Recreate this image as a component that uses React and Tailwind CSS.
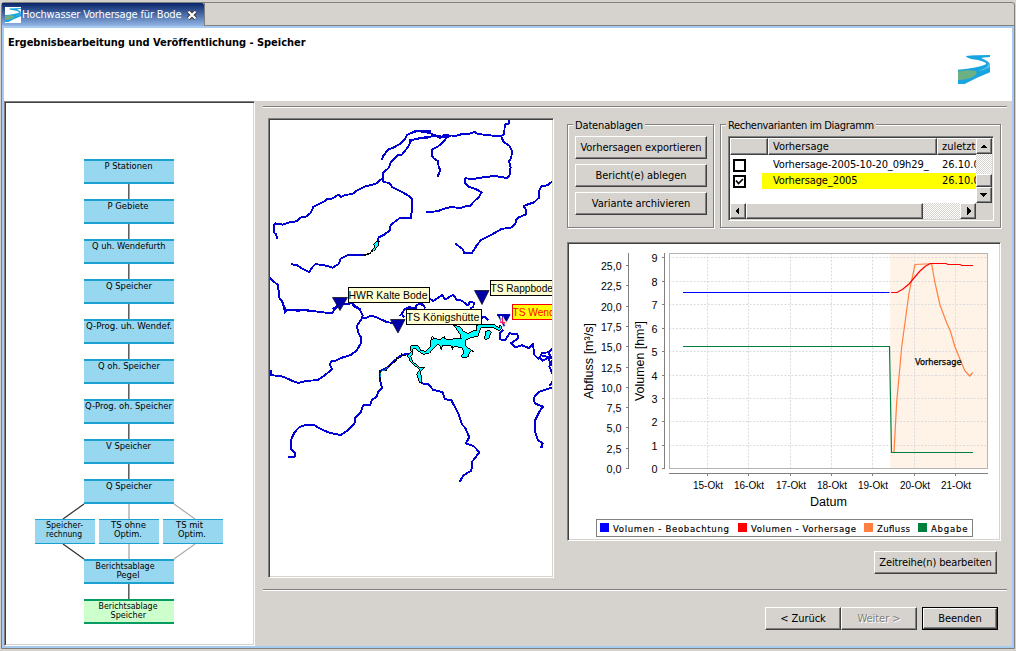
import React from "react";

const UI = "font-['DejaVu_Sans_Condensed','DejaVu_Sans',sans-serif]";
const inset =
  "border border-t-[#808080] border-l-[#808080] border-b-white border-r-white p-px shadow-[inset_1px_1px_0_#404040,inset_-1px_-1px_0_#d6d3ce]";
const raised =
  "border border-t-white border-l-white border-b-[#404040] border-r-[#404040] shadow-[inset_-1px_-1px_0_#808080] bg-[#d6d3ce]";

function River({ className }) {
  return (
    <svg className={className} viewBox="0 0 96 87" preserveAspectRatio="none">
      <path d="M24 3 Q50 0 96 0 V6 Q72 7 70 10 Q96 20 96 30 V52 Q60 66 20 87 H0 V44 Q60 40 84 28 Q88 22 60 15 Q24 11 24 3Z" fill="#18a4e0" />
      <path d="M70 10 Q92 18 92 28 Q86 42 60 47 L76 46 L96 36 V26Z" fill="#5cc0ea" />
      <path d="M0 49 Q30 43 54 48 Q62 58 40 68 Q20 75 0 75Z" fill="#6cb083" />
    </svg>
  );
}

function Button({ children, className = "", disabled, primary }) {
  const btn = (
    <button
      className={`${raised} flex items-center justify-center whitespace-nowrap text-[11px] leading-none tracking-[-0.06px] ${
        disabled ? "text-[#808080] [text-shadow:1px_1px_0_#fff]" : "text-black"
      } ${primary ? "h-[21px] w-full" : "h-[23px]"} ${className}`}
    >
      {children}
    </button>
  );
  return primary ? <div className="h-[23px] w-[76px] border border-black">{btn}</div> : btn;
}

function Group({ title, className, titleClass = "", children }) {
  return (
    <fieldset className={`relative h-[104px] border border-[#808080] shadow-[1px_1px_0_#fff,inset_1px_1px_0_#fff] ${className}`}>
      <div className={`absolute -top-[6px] left-[5px] whitespace-nowrap bg-[#d6d3ce] px-[2px] text-[11px] leading-[14px] ${titleClass}`}>{title}</div>
      {children}
    </fieldset>
  );
}

const STEPS = [
  ["P Stationen", 104.5, 48],
  ["P Gebiete", 107.5, 41],
  ["Q uh. Wendefurth", 92, 73.5],
  ["Q Speicher", 106, 46],
  ["Q-Prog. uh. Wendef.", 86, 86],
  ["Q oh. Speicher", 98, 62],
  ["Q-Prog. oh. Speicher", 85, 87],
  ["V Speicher", 106, 45],
  ["Q Speicher", 106, 46],
];
const BRANCHES = [
  [35, "Speicher-", 46, 37, "rechnung", 46, 36],
  [99, "TS ohne", 111, 35, "Optim.", 114, 28],
  [163, "TS mit", 176, 27, "Optim.", 178, 28],
];

function Txt({ x, y, w, children, ...rest }) {
  return (
    <text x={x} y={y} textLength={w} lengthAdjust="spacingAndGlyphs" {...rest}>
      {children}
    </text>
  );
}

function Workflow() {
  return (
    <svg className={`block h-[541px] w-[247px] ${UI} text-[9.5px]`} viewBox="6 103 247 541">
      {STEPS.map(([label, x, w], i) => {
        const y = 159 + i * 40;
        return (
          <g key={i}>
            {i < 8 && <path d={`M128 ${y + 25}h1v15h-1z`} fill="#606060" />}
            {i < 8 && <path d={`M129 ${y + 25}h1v15h-1z`} fill="#a0a0a0" />}
            <rect x="84" y={y} width="90" height="25" fill="#1ba1cf" />
            <rect x="84" y={y + 2} width="90" height="21" fill="#97d7ef" />
            <Txt x={x} y={y + 10} w={w}>{label}</Txt>
          </g>
        );
      })}
      <g fill="none" strokeWidth="1.2">
        <path d="M84 504L63 519M63 544L84 559" stroke="#303030" />
        <path d="M174 504L195 519M195 544L174 559" stroke="#acacac" />
        <path d="M129 504V519M129 544V559" stroke="#c6c6c6" strokeWidth="2" />
      </g>
      {BRANCHES.map(([x, a, ax, aw, b, bx, bw]) => (
        <g key={x}>
          <rect x={x} y="519" width="60" height="25" fill="#1ba1cf" />
          <rect x={x} y="520" width="60" height="23" fill="#97d7ef" />
          <Txt x={ax} y="528" w={aw}>{a}</Txt>
          <Txt x={bx} y="537" w={bw}>{b}</Txt>
        </g>
      ))}
      <rect x="84" y="559" width="90" height="25" fill="#1ba1cf" />
      <rect x="84" y="561" width="90" height="21" fill="#97d7ef" />
      <Txt x={95.5} y="569" w={59}>Berichtsablage</Txt>
      <Txt x={116.5} y="578" w={23}>Pegel</Txt>
      <path d="M128 584h1v15h-1z" fill="#606060" />
      <path d="M129 584h1v15h-1z" fill="#a0a0a0" />
      <rect x="84" y="599" width="90" height="25" fill="#069b60" />
      <rect x="84" y="601" width="90" height="21" fill="#ccffcc" />
      <Txt x={98.5} y="609" w={59}>Berichtsablage</Txt>
      <Txt x={110.5} y="618" w={35.5}>Speicher</Txt>
    </svg>
  );
}

function RiverMap() {
  return (
    <svg className="block h-[456px] w-[282px] font-['Liberation_Sans',Arial,sans-serif] text-[11px]" viewBox="270 120 282 456">
      <g fill="none" stroke="#0000d2" strokeWidth="5.8" shapeRendering="crispEdges" strokeLinejoin="round">
        <g transform="translate(264 110) scale(.33333)">
          <path d="M353 150L358 138L373 118L390 112L408 102L424 86L428 76L440 70L462 63L500 62" />
          <path d="M500 82L465 85L441 91L434 108L422 124L414 134L401 136L380 158L374 174L357 188L356 205L346 212L336 221L302 230L278 242L264 253L244 254L232 261L224 254L202 267L188 267L184 273L148 291L140 309L126 320L108 323L97 334L76 337L56 344L34 340L30 345V368L36 372L40 386" />
          <path d="M356 205L358 216L376 219L385 232L414 246L437 259L444 268V302L440 325H406L380 345L378 361L359 375L344 382L341 395" />
          <path d="M82 463L98 465L118 478L136 486L145 471L154 463L174 464L206 473L224 462L230 446L250 436L302 434" />
          <path d="M16 503L28 514L42 525L46 564L55 573L64 610" />
          <path d="M80 599H110M122 599H135M206 598L222 586M258 576L274 588L290 599" />
          <path d="M420 598L435 592L455 598M466 581L480 588" />
        </g>
        <g transform="translate(410 110) scale(.33333)">
          <path d="M-4 73L15 63L38 65L60 69L75 76L90 84L100 76L140 77L160 71L176 72L194 66L204 72L230 75L270 79L283 73L284 44L296 41L297 30" />
          <path d="M-4 91L25 86L55 80L82 78L110 82L125 76M110 82L100 96L83 110L66 119L65 136L72 146L84 153L86 170L91 180L83 200" />
          <path d="M274 79L280 95L297 106L306 124L304 142L297 154L302 172L298 198L290 204L256 198L225 201L190 207L166 205L165 220L178 231L201 239L215 247L206 262L191 275L181 287L166 289L150 294L121 291L100 297L82 304L48 306" />
          <path d="M428 214L412 226L395 228L386 244L387 263L372 277L354 283L341 288L348 300L347 314L328 321L318 330L316 342L306 352L274 357L245 374L212 391L199 408L186 429H162L159 418L136 401" />
        </g>
        <g transform="translate(264 300) scale(.33333)">
          <path d="M52 0L66 32L82 29L102 33L118 29L136 33L154 34L174 37L204 39L214 27L228 14L264 10L272 20L288 29L296 46L294 55L308 53L322 47L342 54L370 67L392 69" />
          <path d="M294 55L278 78L284 100L291 112V130L278 151L262 164L234 173L218 181L201 184L198 194L204 208L180 228L160 241L129 242L104 249L86 243L60 231L42 227L20 226V211" />
          <path d="M438 162L414 164L394 180L370 203L347 214L348 240L354 264L342 275L339 290L324 300L318 315H298L291 335L273 355L272 369L252 391L231 405L198 399L166 385L150 375L125 374L104 383L91 398L80 422V445L94 460L91 472H72" />
          <path d="M420 52L414 42L420 30L436 23L460 25M466 10L480 18" />
        </g>
        <g transform="translate(400 270) scale(.33333)">
          <path d="M88 85L100 93L126 75L136 88L160 74L171 90L186 92L204 107L209 96L222 98L220 110L210 116" />
          <path d="M0 138L14 118L28 111L46 117L50 105L66 100L76 114M242 152L246 142H256L265 151M290 134H330M310 180L300 190V208L315 210L329 190L352 193L356 204L333 220L345 232L366 226L386 234L399 222L403 255L416 267L426 250L448 246L457 237M418 258L427 273L445 263L451 281L457 287M424 256L455 264M446 250L458 268L448 290L458 312V345M457 335L449 348" />
          <path d="M456 353L432 360L415 367L402 383L404 400L429 410L420 422L406 449V486L413 510L428 520L426 532H420" />
          <path d="M64 340L84 342L100 360L128 366L134 387L154 391L175 430L186 463L196 474L208 502L197 520L222 529L238 547L217 574L214 602L190 616L179 636" />
        </g>
      </g>
      <g transform="translate(400 270) scale(.33333)" shapeRendering="crispEdges" stroke="#000" strokeWidth="3" fill="#0ff">
        <path d="M20 258L34 246L30 230L36 227L55 227L63 242L78 244L92 228L93 210L102 205L95 198L104 205L120 209L132 200L137 208L184 206L180 192L170 178L160 165L180 170L190 183L204 190L216 184L230 180V166L245 162L284 165L297 174L300 166L306 171L299 182L283 174L242 174L234 198L210 204L196 211L198 229L216 241L208 248L204 260L190 264L182 258L192 248L186 233L164 229L158 236L152 226L128 225L124 235L114 221L98 238L88 250L70 253L54 242L46 235L38 236V252L32 258L38 275L50 284L60 294L73 292L60 308L66 322L66 340L58 336L50 312L60 300L46 288L28 272L28 264Z" />
        <path d="M256 186L264 180L274 186L266 206L254 208Z" />
        <path d="M94 200L96 210M134 198V208M122 232L126 240M158 228V240M216 241L222 246" fill="none" strokeWidth="4" />
      </g>
      <g transform="translate(264 110) scale(.33333)" shapeRendering="crispEdges" stroke="#000" strokeWidth="3">
        <path d="M322 424L334 408L327 404L339 393L346 394L341 410L328 424Z" fill="#0ff" />
        <path d="M300 436L318 430L326 420" fill="none" strokeWidth="4" />
      </g>
      <g transform="translate(264 300) scale(.33333)" shapeRendering="crispEdges" stroke="#000" strokeWidth="4" fill="none">
        <path d="M426 166L412 168L398 180L386 190L370 204L366 212L350 216L344 208M350 218L346 228L350 244" strokeDasharray="11 7" />
        <path d="M412 158V172M398 170V184" strokeWidth="3" />
        <path d="M372 200L362 210L352 214M351 220V232" stroke="#00d8d8" strokeWidth="2" />
      </g>
      <g fill="#0000a8" stroke="#101020" strokeWidth=".8">
        <path d="M332.500 297.500H347.500L340 310.500Z" />
        <path d="M390.500 319.500H405L398 333Z" />
        <path d="M474.500 290.500H489L482 304.500Z" />
        <path d="M497 314.500H510.500L504 327Z" stroke="none" />
      </g>
      <path d="M500 316l2 0 1 6-2 0z" fill="#fff" />
      <path d="M503 316l2 4 2 2-1 4-3-3z" fill="#ffef9b" />
      <path d="M500 322l5 1M502 318l1 6" stroke="#ff1478" strokeWidth="1.4" />
      <g fill="#ffffd2" stroke="#000">
        <rect x="348.500" y="287.500" width="81" height="15" />
        <rect x="406.500" y="309.500" width="75" height="15" />
        <rect x="490.500" y="280.500" width="80" height="15" />
        <rect x="512.500" y="304.500" width="80" height="15" fill="#ff0" stroke="red" />
      </g>
      <Txt x={348.500} y="299" w={79}>HWR Kalte Bode</Txt>
      <Txt x={406.500} y="321" w={73}>TS Königshütte</Txt>
      <Txt x={490.500} y="292" w={62.500}>TS Rappbode</Txt>
      <Txt x={512.500} y="316" w={68} fill="red">TS Wendefurth</Txt>
    </svg>
  );
}

const LEFT = ["0,0", "2,5", "5,0", "7,5", "10,0", "12,5", "15,0", "17,5", "20,0", "22,5", "25,0"];
const DAYS = [707.5, 748.5, 790.5, 831.5, 872.5, 914.5, 955.5];
const GRID = [468.5, 445.5, 421.5, 398.5, 375.5, 351.5, 328.5, 304.5, 281.5, 257.5];
const LEGEND = [
  ["#0000ff", 600, "Volumen - Beobachtung", 116],
  ["#ff0000", 738, "Volumen - Vorhersage", 105],
  ["#ff8040", 864, "Zufluss", 33],
  ["#00803f", 918, "Abgabe", 36.5],
];

function Chart() {
  return (
    <svg className="block h-[295px] w-[430px] font-['Liberation_Sans',Arial,sans-serif] text-[10px]" viewBox="569 244 430 295">
      <rect x="890" y="253" width="97" height="215" fill="#fff2e6" />
      <g stroke="#dcdcdc" strokeDasharray="2 1.5">
        {GRID.map((y) => <path key={y} d={`M669 ${y}H987`} />)}
        {DAYS.map((x) => <path key={x} d={`M${x} 253V468`} />)}
      </g>
      <rect x="669.500" y="253.500" width="318" height="215" fill="none" stroke="#b4b4b4" />
      <path d="M628.500 253V469M664.500 253V469M669 473.500H988" stroke="#808080" />
      {LEFT.map((t, i) => {
        const y = Math.round(468 - i * 20.3) + 0.5;
        const w = t.length > 3 ? 20.5 : 15;
        return (
          <g key={t}>
            <path d={`M626 ${y}h2`} stroke="#808080" />
            <Txt x={621.5 - w} y={y + 4} w={w}>{t}</Txt>
          </g>
        );
      })}
      {GRID.map((y, i) => (
        <g key={y}>
          <path d={`M662 ${y}h2`} stroke="#808080" />
          <Txt x={651.5} y={y + 4} w={6}>{i}</Txt>
        </g>
      ))}
      {DAYS.map((x, i) => (
        <g key={x}>
          <path d={`M${x} 474v2`} stroke="#808080" />
          <Txt x={x - 14.5} y="489" w={30}>{`${15 + i}-Okt`}</Txt>
        </g>
      ))}
      <g className="text-[12px]">
        <Txt x={810} y="506" w={37}>Datum</Txt>
        <Txt x={0} y={0} w={76} transform="translate(593 399) rotate(-90)">Abfluss [m³/s]</Txt>
        <Txt x={0} y={0} w={80} transform="translate(644 401) rotate(-90)">Volumen [hm³]</Txt>
      </g>
      <g fill="none" strokeWidth="1.2">
        <path d="M683 292.500H889.500" stroke="#00f" />
        <path d="M894 452L896.700 402L901.700 347L909 293L915 264.500L925 264L931.700 264L935 283L940 305L946.700 323L950.300 331L955 347L961.700 363.300L965 371L969.700 376L972.700 372.500" stroke="#ff8040" />
        <path d="M891 292.500H897L903 289L909 284L914 278L920 271L925 266.500L930 263.500H946L948 264.500H960L962 265.500H973" stroke="red" strokeWidth="1.2" />
        <path d="M683 346.500H889.500L891.500 452.500H973" stroke="#00803f" />
      </g>
      <g className={UI}>
        <g className="text-[9px]" stroke="#000" strokeWidth=".25">
          <Txt x={915} y="365" w={46.500}>Vorhersage</Txt>
        </g>
        <rect x="596.500" y="519.500" width="376" height="17" fill="#fff" stroke="#808080" />
        <g className="text-[9.5px]">
          {LEGEND.map(([c, x, t, w]) => (
            <g key={t}>
              <rect x={x} y="523" width="9" height="9" fill={c} />
              <text x={x + 13} y="532" textLength={w} stroke="#000" strokeWidth=".15">{t}</text>
            </g>
          ))}
        </g>
      </g>
    </svg>
  );
}

function Arrow({ d, className = "" }) {
  return (
    <div className={`${raised} flex shrink-0 items-center justify-center ${className}`}>
      <svg className="shrink-0" width="8" height="8" viewBox="0 0 8 8" shapeRendering="crispEdges"><path d={d} /></svg>
    </div>
  );
}

const track = "bg-[repeating-conic-gradient(#fff_0_25%,#d6d3ce_0_50%)] bg-[length:2px_2px]";

function Check({ on }) {
  return (
    <div className="ml-[3px] mt-[2px] size-[13px] shrink-0 border-2 border-black bg-white">
      {on && <svg className="block size-[9px]" viewBox="0 0 9 9"><path d="M1 3.500L3.500 6.500L8 2" fill="none" stroke="#000" strokeWidth="1.7" /></svg>}
    </div>
  );
}

function Row({ name, on, selected }) {
  return (
    <div className="flex h-4 text-[11px] leading-4">
      <div className="w-8"><Check on={on} /></div>
      <div className={`flex flex-1 ${selected ? "bg-[#ffff00]" : ""}`}>
        <div className="w-[180px] shrink-0 overflow-hidden whitespace-nowrap pl-[11px] tracking-[-0.1px]">{name}</div>
        <div className="w-[34px] shrink-0 overflow-hidden whitespace-nowrap">26.10.05</div>
      </div>
    </div>
  );
}

function VariantTable() {
  return (
    <div className={`ml-[7px] mt-[11px] h-[85px] w-[266px] bg-white ${inset}`}>
      <div className="flex h-[65px]">
        <div className="w-[246px] overflow-hidden">
          <div className="flex h-[17px] text-[11px] leading-[15px]">
            <div className={`${raised} w-[38px] shrink-0`} />
            <div className={`${raised} w-[169px] shrink-0 pl-1`}>Vorhersage</div>
            <div className={`${raised} w-[60px] shrink-0 pl-1`}>zuletzt</div>
          </div>
          <div className="mt-[2px]">
            <Row name="Vorhersage-2005-10-20_09h29_" />
            <Row name="Vorhersage_2005" on selected />
          </div>
        </div>
        <div className={`flex w-4 flex-col ${track}`}>
          <Arrow className="h-4 w-4" d="M0 6h7L4 3H3z" />
          <div className="flex-1" />
          <div className={`${raised} h-[13px] w-4`} />
          <Arrow className="h-4 w-4" d="M0 2h7L4 6H3z" />
        </div>
      </div>
      <div className="flex h-4">
        <div className={`flex w-[246px] ${track}`}>
          <Arrow className="w-4" d="M5 0v8L1 4z" />
          <div className={`${raised} w-[177px]`} />
          <div className="flex-1" />
          <Arrow className="w-4" d="M3 0v8L7 4z" />
        </div>
        <div className="w-4 bg-[#d6d3ce]" />
      </div>
    </div>
  );
}

function Separator() {
  return <div className="h-[2px] w-[744px] border-b border-t border-b-white border-t-[#808080]" />;
}

export default function App() {
  return (
    <div className={`h-[651px] w-[1016px] overflow-hidden bg-[#d6d3ce] pl-px pt-[2px] text-black ${UI}`}>
      <div className="flex h-[647px] w-[1014px] flex-col rounded-t-[3px] border border-[#808080]">
        <div className="flex h-[23px] shrink-0">
          <div className="flex w-[202px] items-center rounded-tr-[2px] bg-gradient-to-b from-[#0a246a] to-[#93b6e6] pl-[3px] text-white">
            <div className="size-4 shrink-0 bg-white pt-[1px]"><River className="h-[14px] w-4" /></div>
            <span className="ml-px mt-px whitespace-nowrap text-[11px] tracking-[-0.16px]">Hochwasser Vorhersage für Bode</span>
            <svg className="ml-[6px] size-[10px] shrink-0" viewBox="0 0 10 10">
              <path d="M1.500 1.500L8.500 8.500M8.500 1.500L1.500 8.500" stroke="#333" strokeWidth="4" />
              <path d="M1.500 1.500L8.500 8.500M8.500 1.500L1.500 8.500" stroke="#fff" strokeWidth="2.200" />
            </svg>
          </div>
          <div className="flex-1 border-b border-l border-[#808080]" />
        </div>
        <div className="flex flex-1 flex-col border-2 border-[#a6caf0]">
          <header className="flex h-[73px] shrink-0 justify-between bg-white pl-[4px] pr-[22px]">
            <h1 className="mt-[8px] whitespace-nowrap text-[11px] font-bold leading-[14px] tracking-[-0.02px]">Ergebnisbearbeitung und Veröffentlichung - Speicher</h1>
            <River className="mt-[27px] h-[29px] w-8" />
          </header>
          <div className="flex flex-1">
            <aside className={`h-[545px] w-[251px] bg-white ${inset}`}><Workflow /></aside>
            <main className="ml-2 flex flex-col pt-[5px]">
              <Separator />
              <div className="flex h-[481px] pl-[5px] pt-[10px]">
                <div className={`h-[460px] w-[286px] bg-white ${inset}`}><RiverMap /></div>
                <div className="ml-[13px] flex w-[434px] flex-col">
                  <div className="mt-[6px] flex gap-[6px]">
                    <Group title="Datenablagen" className="w-[147px]" titleClass="tracking-[-0.15px]">
                      <div className="ml-[7px] mt-[11px] flex w-[132px] flex-col gap-[5px]">
                        <Button>Vorhersagen exportieren</Button>
                        <Button>Bericht(e) ablegen</Button>
                        <Button>Variante archivieren</Button>
                      </div>
                    </Group>
                    <Group title="Rechenvarianten im Diagramm" className="w-[281px]" titleClass="tracking-[-0.33px]"><VariantTable /></Group>
                  </div>
                  <div className={`mt-[14px] h-[299px] w-[434px] shrink-0 bg-white ${inset}`}><Chart /></div>
                  <div className="mt-[10px] flex justify-end pr-1"><Button className="w-[123px] tracking-[-0.14px]">Zeitreihe(n) bearbeiten</Button></div>
                </div>
              </div>
              <Separator />
              <div className="mt-4 flex justify-end pr-[9px]">
                <Button className="w-[76px]">&lt; Zurück</Button>
                <Button className="mr-[5px] w-[76px]" disabled>Weiter &gt;</Button>
                <Button primary>Beenden</Button>
              </div>
            </main>
          </div>
        </div>
      </div>
    </div>
  );
}
